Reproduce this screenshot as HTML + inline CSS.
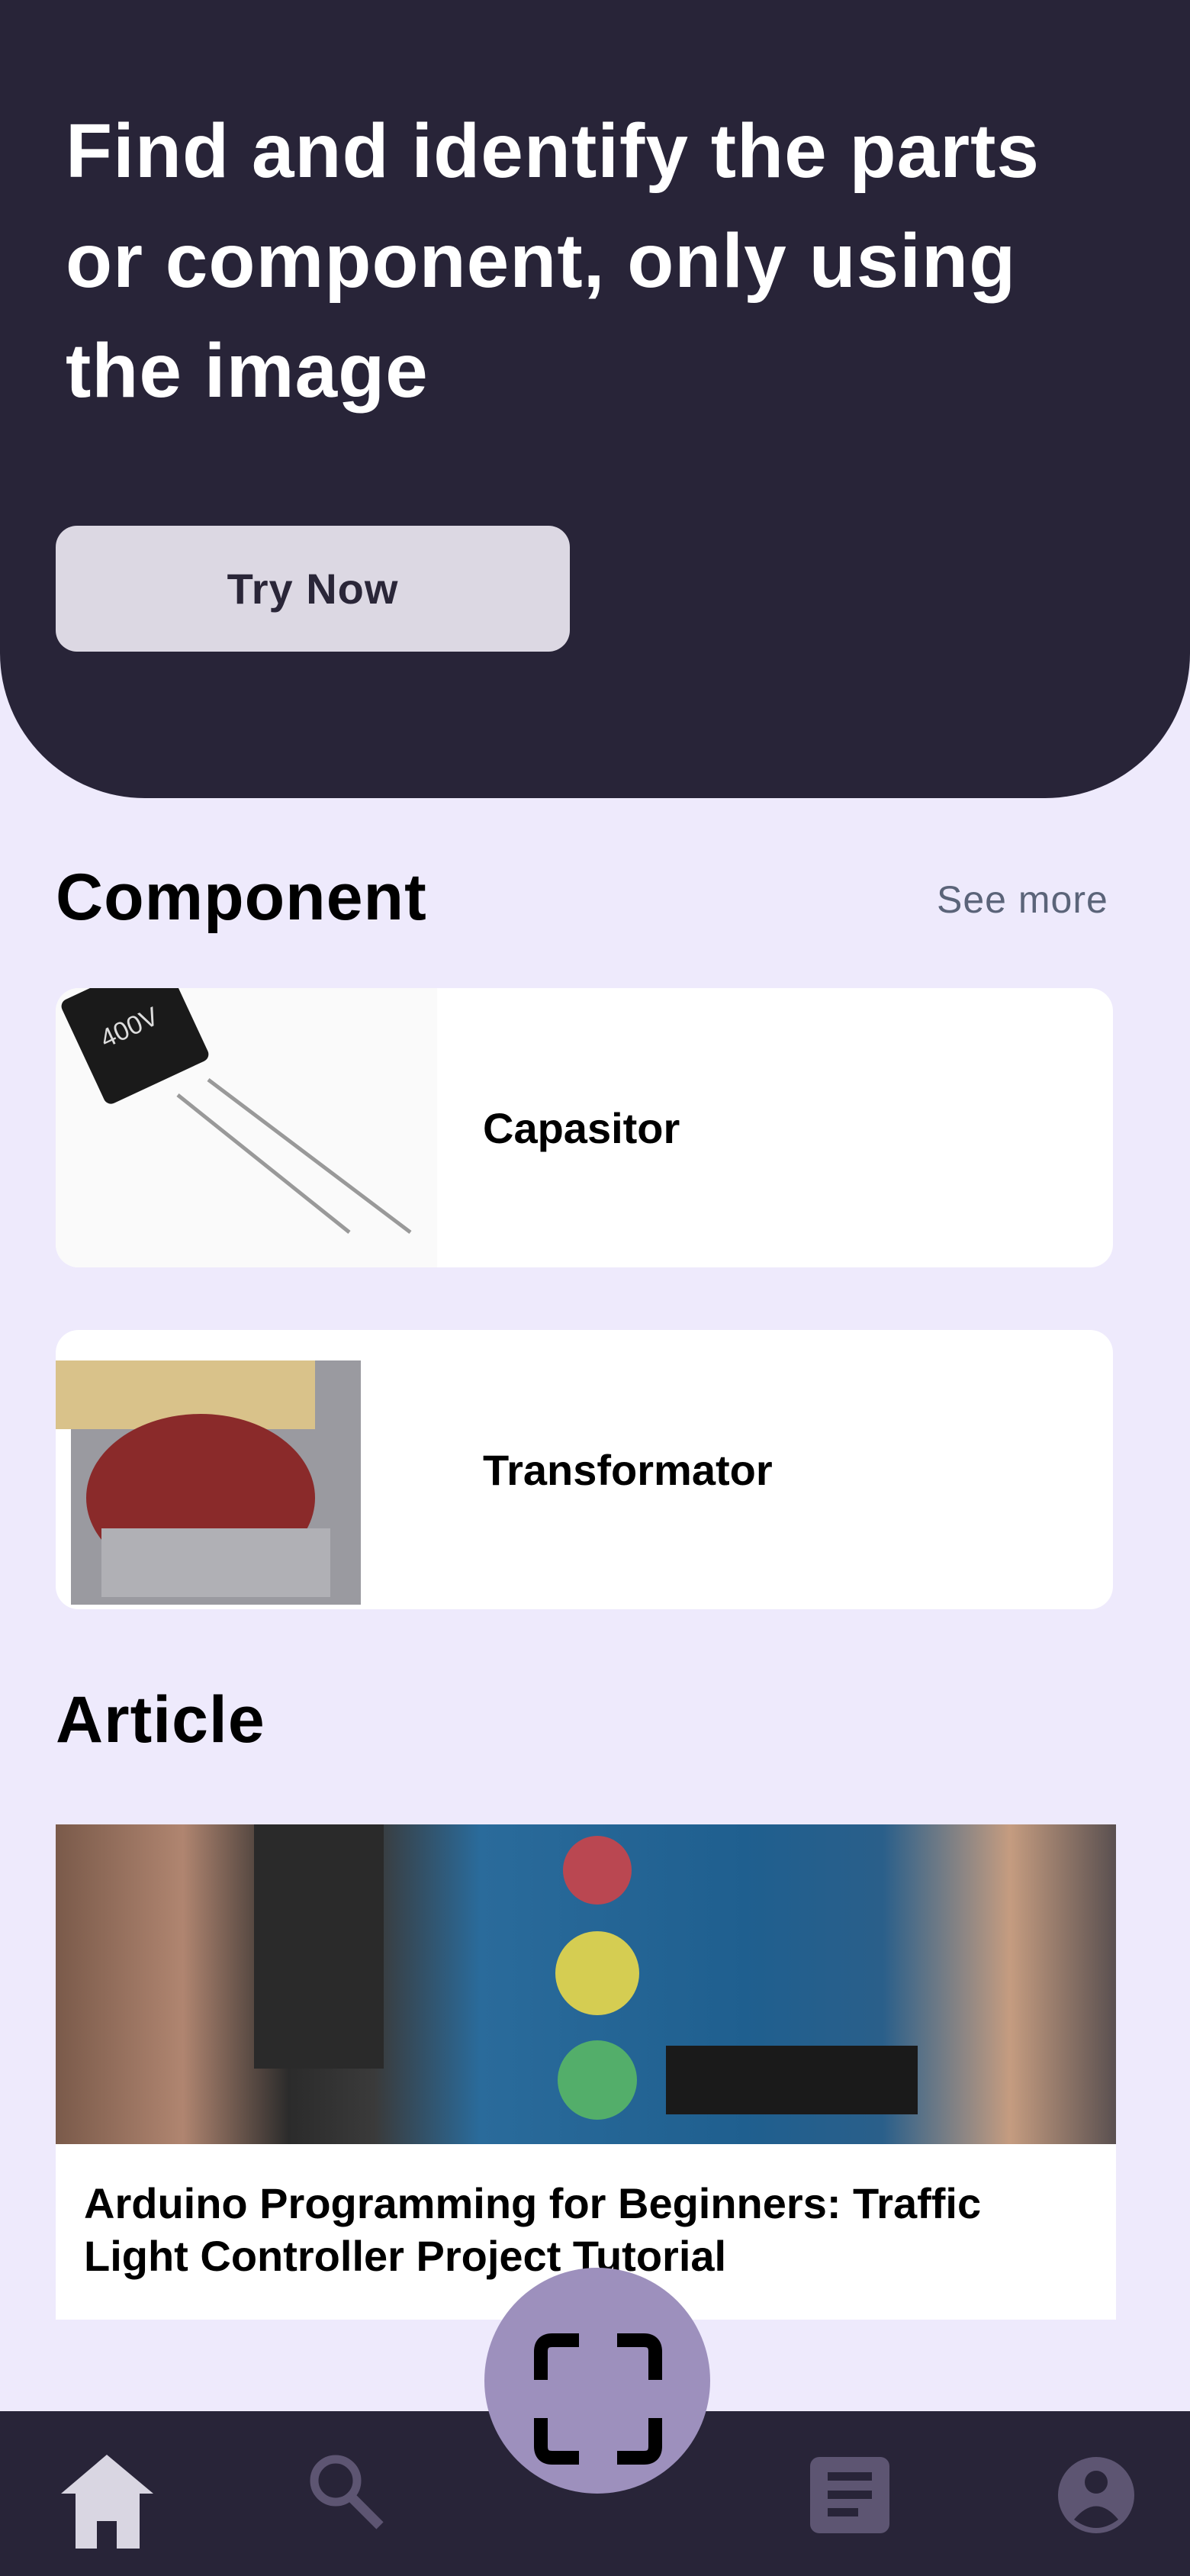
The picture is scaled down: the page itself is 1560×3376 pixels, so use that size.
<!DOCTYPE html>
<html><head><meta charset="utf-8"><style>
*{margin:0;padding:0;box-sizing:border-box}
body{width:1560px;height:3376px;background:#eeeafc;font-family:"Liberation Sans",sans-serif;position:relative;overflow:hidden}
.hdr{position:absolute;left:0;top:0;width:1560px;height:1046px;background:#282438;border-radius:0 0 190px 190px}
.h1{position:absolute;left:86px;top:126px;color:#fff;font-weight:bold;font-size:100px;line-height:144px;letter-spacing:1px;width:1480px;white-space:nowrap}
.btn{position:absolute;left:73px;top:689px;width:674px;height:165px;background:#dcd8e3;border-radius:28px;color:#2a2638;font-weight:bold;font-size:56px;letter-spacing:1px;display:flex;align-items:center;justify-content:center}
.sec{position:absolute;left:73px;font-weight:bold;font-size:86px;letter-spacing:1px;color:#000}
.more{position:absolute;left:1228px;top:1150px;font-size:50px;letter-spacing:1px;color:#5b6479}
.card{position:absolute;left:73px;width:1386px;height:366px;background:#fff;border-radius:30px;overflow:hidden}
.card .t{position:absolute;left:560px;top:0;height:366px;display:flex;align-items:center;font-weight:bold;font-size:56px}
.art{position:absolute;left:73px;top:2391px;width:1390px;height:649px;background:#fff}
.img{position:absolute;left:0;top:0;width:1390px;height:419px;background:linear-gradient(90deg,#7a5a4a 0%,#b08570 12%,#2b2b2b 22%,#3a3a3a 30%,#2a6b9b 40%,#1f5f8f 65%,#2a5f8a 78%,#c59c80 90%,#5a5050 100%)}
.at{position:absolute;left:37px;top:462px;font-weight:bold;font-size:56px;line-height:69px;color:#000}
.nav{position:absolute;left:0;top:3160px;width:1560px;height:216px;background:#282438}
.fab{position:absolute;left:635px;top:2972px;width:296px;height:296px;border-radius:50%;background:#9d90bd}
</style></head><body>
<div class="hdr"></div>
<div class="h1">Find and identify the parts<br>or component, only using<br>the image</div>
<div class="btn">Try Now</div>
<div class="sec" style="top:1127px">Component</div>
<div class="more">See more</div>
<div class="card" style="top:1295px">
<svg width="500" height="366" style="position:absolute;left:0;top:0"><rect width="500" height="366" fill="#fafafa"/><g transform="rotate(-25 110 80)"><rect x="40" y="-20" width="150" height="150" rx="10" fill="#1a1a1a"/><text x="70" y="60" fill="#ddd" font-size="34" font-family="Liberation Sans">400V</text></g><line x1="160" y1="140" x2="385" y2="320" stroke="#999" stroke-width="5"/><line x1="200" y1="120" x2="465" y2="320" stroke="#999" stroke-width="5"/></svg>
<div class="t">Capasitor</div></div>
<div class="card" style="top:1743px">
<svg width="420" height="366" style="position:absolute;left:0;top:0"><rect x="20" y="40" width="380" height="320" fill="#9a9aa0"/><rect x="0" y="40" width="340" height="90" fill="#d9c28a"/><ellipse cx="190" cy="220" rx="150" ry="110" fill="#8a2a2a"/><rect x="60" y="260" width="300" height="90" fill="#b0b0b5"/></svg>
<div class="t" style="left:560px">Transformator</div></div>
<div class="sec" style="top:2205px">Article</div>
<div class="art"><div class="img">
<svg width="1390" height="419" style="position:absolute;left:0;top:0"><circle cx="710" cy="195" r="55" fill="#e9d84a" opacity=".9"/><circle cx="710" cy="335" r="52" fill="#5fc05f" opacity=".8"/><circle cx="710" cy="60" r="45" fill="#e04040" opacity=".8"/><rect x="800" y="290" width="330" height="90" fill="#1a1a1a"/><rect x="260" y="0" width="170" height="320" fill="#2a2a2a"/></svg></div>
<div class="at">Arduino Programming for Beginners: Traffic<br>Light Controller Project Tutorial</div></div>
<div class="nav"></div>
<div class="fab"></div>
<svg style="position:absolute;left:0;top:2972px" width="1560" height="404">
<g fill="none" stroke="#000" stroke-width="18"><path d="M709 147V110q0-15 15-15h35M809 95h35q15 0 15 15v37M709 197v37q0 15 15 15h35M809 249h35q15 0 15-15v-37"/></g>
<path d="M140 245L80 296h19v72h28v-36h26v36h30v-72h18z" fill="#d9d6e2"/>
<circle cx="440" cy="279" r="28" fill="none" stroke="#5d5572" stroke-width="11"/><path d="M460 300l38 38" stroke="#5d5572" stroke-width="13"/>
<rect x="1062" y="248" width="104" height="100" rx="12" fill="#5d5572"/><g fill="#282438"><rect x="1085" y="268" width="58" height="11"/><rect x="1085" y="292" width="58" height="11"/><rect x="1085" y="315" width="40" height="11"/></g>
<circle cx="1437" cy="298" r="50" fill="#5d5572"/><circle cx="1437" cy="281" r="15" fill="#282438"/><path d="M1408 330q29-35 58 0q-29 22-58 0z" fill="#282438"/>
</svg>
</body></html>
